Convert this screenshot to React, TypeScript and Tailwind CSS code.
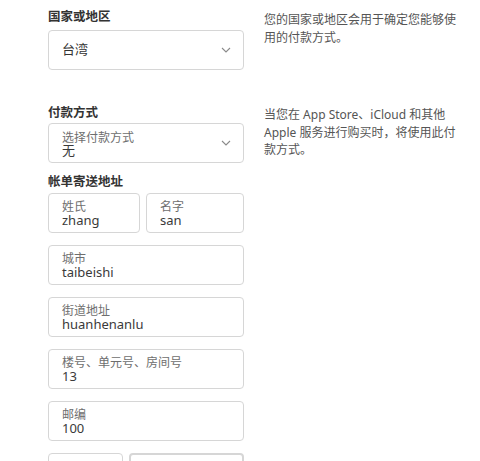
import { ReactNode } from 'react';

const font = { fontFamily: '"Noto Sans", "Noto Sans CJK SC", sans-serif' };

function Chevron() {
  return (
    <svg width="10" height="6" viewBox="0 0 10 6" className="shrink-0">
      <polyline points="1,1 5,5 9,1" fill="none" stroke="#8a8a8a" strokeWidth="1.1" />
    </svg>
  );
}

function Box({ children, className = '' }: { children: ReactNode; className?: string }) {
  return (
    <div className={`h-[40px] rounded-[4px] border border-[#d6d6d6] bg-white flex items-center px-[13px] ${className}`}>
      {children}
    </div>
  );
}

function Field({ label, value, className = '' }: { label: string; value: string; className?: string }) {
  return (
    <Box className={className}>
      <div className="flex flex-col">
        <span className="text-[12px] leading-[13px] text-[#6e6e6e]">{label}</span>
        <span className="text-[13px] leading-[14px] text-[#3a3a3a]">{value}</span>
      </div>
    </Box>
  );
}

function SectionLabel({ children }: { children: ReactNode }) {
  return <div className="text-[12.5px] font-semibold text-[#333] leading-[14px]">{children}</div>;
}

export default function App() {
  return (
    <div className="w-[480px] h-[461px] overflow-hidden bg-white pl-[48px] pt-[10px]" style={font}>
      <div className="flex">
        <div className="w-[196px]">
          <SectionLabel>国家或地区</SectionLabel>
          <Box className="mt-[6px] justify-between pr-[12px]">
            <span className="text-[13px] text-[#333]">台湾</span>
            <Chevron />
          </Box>
        </div>
        <div className="ml-[20px] w-[200px] text-[12px] leading-[18px] text-[#555] pt-[1px]">
          您的国家或地区会用于确定您能够使用的付款方式。
        </div>
      </div>

      <div className="flex mt-[36px]">
        <div className="w-[196px]">
          <SectionLabel>付款方式</SectionLabel>
          <Box className="mt-[3px] justify-between pr-[12px]">
            <div className="flex flex-col pt-[2px]">
              <span className="text-[12px] leading-[13px] text-[#6e6e6e]">选择付款方式</span>
              <span className="text-[13px] leading-[13px] text-[#3a3a3a]">无</span>
            </div>
            <Chevron />
          </Box>

          <div className="mt-[12px]">
            <SectionLabel>帐单寄送地址</SectionLabel>
          </div>
          <div className="mt-[4px] flex flex-col gap-[12px]">
            <div className="flex gap-[6px]">
              <Field label="姓氏" value="zhang" className="w-[92px]" />
              <Field label="名字" value="san" className="flex-1" />
            </div>
            <Field label="城市" value="taibeishi" />
            <Field label="街道地址" value="huanhenanlu" />
            <Field label="楼号、单元号、房间号" value="13" />
            <Field label="邮编" value="100" />
            <div className="flex gap-[6px]">
              <Box className="w-[75px]">
                <span />
              </Box>
              <Box className="flex-1 border-[2px] border-[#2f6fc5]">
                <span />
              </Box>
            </div>
          </div>
        </div>
        <div className="ml-[20px] w-[196px] text-[12px] leading-[17.5px] text-[#555]">
          当您在 App Store、iCloud 和其他 Apple 服务进行购买时，将使用此付款方式。
        </div>
      </div>
    </div>
  );
}
